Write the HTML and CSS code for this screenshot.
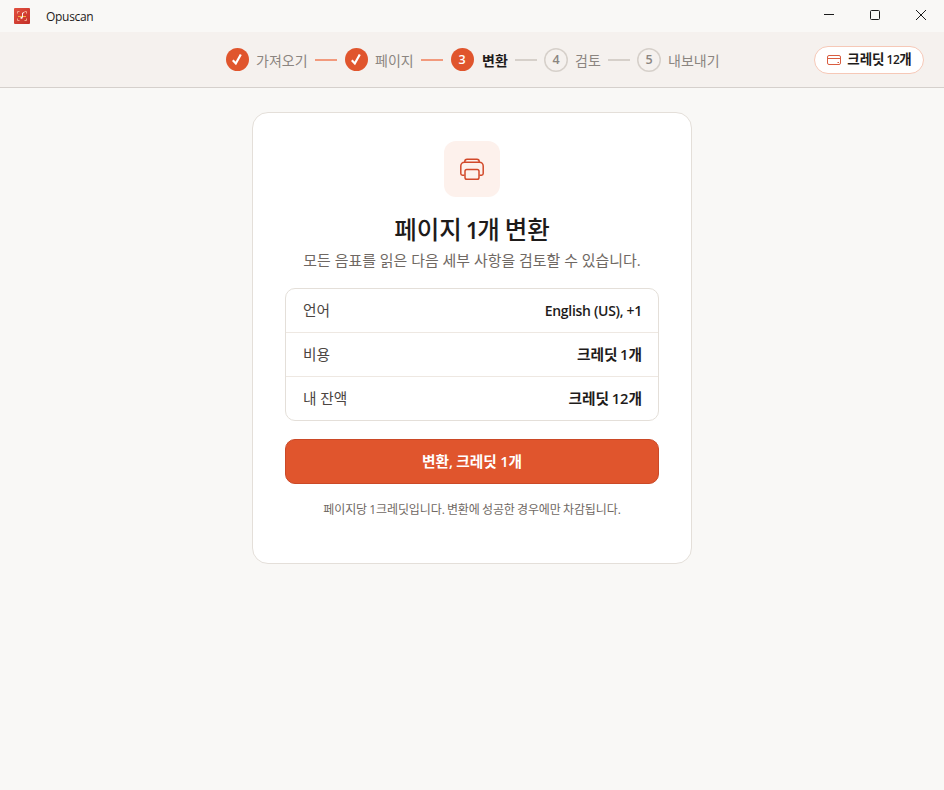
FILE: index.html
```html
<!DOCTYPE html>
<html lang="ko">
<head>
<meta charset="utf-8">
<title>Opuscan</title>
<link rel="stylesheet" href="styles.css">
</head>
<body>
<header class="titlebar">
  <svg class="logo" width="16" height="16" viewBox="0 0 16 16" fill="none">
    <defs><linearGradient id="red" x1="0" y1="0" x2="1" y2="1"><stop stop-color="#e2503f"/><stop offset="1" stop-color="#c32f28"/></linearGradient></defs>
    <rect width="16" height="16" rx="1" fill="url(#red)"/>
    <path d="M3.500 5.500v-2h2M10.500 3.500h2v2M12.500 10.500v2h-2M5.500 12.500h-2v-2" stroke="#f0a58e"/>
    <path d="M4 8.500h8" stroke="#f3b13f"/>
    <path d="M8.500 9.500V5l1.800-.5" stroke="#fff" stroke-width=".9"/>
    <ellipse cx="7.500" cy="9.800" rx="1.200" ry=".9" fill="#fff"/>
  </svg>
  <span class="app-name">Opuscan</span>
  <div class="controls">
    <svg width="46" height="32" viewBox="0 0 46 32"><path d="M18 14.500h10" stroke="#1b1b1b"/></svg>
    <svg width="46" height="32" viewBox="0 0 46 32"><rect x="18.500" y="10.500" width="9" height="9" rx="1" fill="none" stroke="#1b1b1b"/></svg>
    <svg width="46" height="32" viewBox="0 0 46 32"><path d="M18 10l10 10M28 10L18 20" stroke="#1b1b1b"/></svg>
  </div>
</header>
<nav class="stepbar">
  <ol class="steps">
    <li class="step s1"><span class="dot done"><svg width="24" height="24" viewBox="0 0 24 24"><path d="M7.800 12.300l3 3.200 5-9" fill="none" stroke="#fff" stroke-width="2.200"/></svg></span><span class="label">가져오기</span></li>
    <li class="link on"></li>
    <li class="step s2"><span class="dot done"><svg width="24" height="24" viewBox="0 0 24 24"><path d="M7.800 12.300l3 3.200 5-9" fill="none" stroke="#fff" stroke-width="2.200"/></svg></span><span class="label">페이지</span></li>
    <li class="link on"></li>
    <li class="step s3"><span class="dot done">3</span><span class="label current">변환</span></li>
    <li class="link"></li>
    <li class="step s4"><span class="dot">4</span><span class="label">검토</span></li>
    <li class="link"></li>
    <li class="step s5"><span class="dot">5</span><span class="label">내보내기</span></li>
  </ol>
  <button class="credits">
    <svg width="16" height="12" viewBox="0 0 16 12" fill="none" stroke="#d95d40"><rect x="1.500" y="1.500" width="13" height="9" rx="1.500"/><path d="M1.500 4.500h13M11.500 8.500H13"/></svg>
    <span>크레딧 <span class="num">12</span>개</span>
  </button>
</nav>
<main class="card">
  <div class="badge">
    <svg width="56" height="56" viewBox="0 0 56 56" fill="none" stroke="#d2492a" stroke-width="1.500">
      <path d="M20.500 34.200h-2a1.700 1.700 0 0 1-1.700-1.700v-7.500a3.700 3.700 0 0 1 3.700-3.700h15a3.700 3.700 0 0 1 3.700 3.700v7.500a1.700 1.700 0 0 1-1.700 1.700h-2"/>
      <path d="M20.800 21.300v-.8a2.300 2.300 0 0 1 2.300-2.300h9.800a2.300 2.300 0 0 1 2.300 2.300v.8"/>
      <rect x="21" y="28.500" width="14" height="9.800" rx="1.800"/>
    </svg>
  </div>
  <h1>페이지 <span class="num">1</span>개 변환</h1>
  <p class="sub">모든 음표를 읽은 다음 세부 사항을 검토할 수 있습니다.</p>
  <dl class="details">
    <div class="row"><dt>언어</dt><dd class="latin">English (US), +1</dd></div>
    <div class="row"><dt>비용</dt><dd>크레딧 1개</dd></div>
    <div class="row"><dt>내 잔액</dt><dd>크레딧 12개</dd></div>
  </dl>
  <button class="convert">변환, 크레딧 1개</button>
  <p class="note">페이지당 1크레딧입니다. 변환에 성공한 경우에만 차감됩니다.</p>
</main>
</body>
</html>
```

FILE: styles.css
```css
* { box-sizing: border-box; margin: 0; padding: 0; }
body { width: 944px; height: 790px; background: #f9f8f6; color: #1e1b1a; font: 14px/20px "Open Sans", "Noto Sans CJK KR", sans-serif; overflow: hidden; }
button { font: inherit; color: inherit; white-space: nowrap; }
.titlebar { height: 32px; display: flex; align-items: center; padding-left: 14px; }
.app-name { margin-left: 16px; padding-top: 1px; font-size: 12px; letter-spacing: -.3px; line-height: 31px; }
.controls { margin-left: auto; display: flex; }
.stepbar { height: 56px; background: #f5f1ee; border-bottom: 1px solid #d5d0cc; display: flex; align-items: center; justify-content: space-between; padding: 0 20px 0 225px; }
.steps { display: flex; align-items: center; list-style: none; }
.step { height: 24px; display: flex; align-items: center; gap: 7px; white-space: nowrap; }
.s1 { width: 90px; }
.s2 { width: 77px; }
.s3 { width: 65px; }
.s4 { width: 64px; }
.s5 { width: 90px; }
.dot { flex: none; width: 24px; height: 24px; box-shadow: inset 0 0 0 1.5px #d6d0ca; border-radius: 50%; display: flex; align-items: center; justify-content: center; font-size: 12.5px; font-weight: 600; color: #8b8580; }
.dot.done { width: 23px; height: 23px; margin: 0 .5px; background: #e0552d; color: #fff; box-shadow: none; }
.dot svg { flex: none; }
.label { font-size: 14px; color: #8b8580; padding-top: 2px; }
.current { color: #1e1b1a; font-weight: 700; padding-left: 1px; }
.link { width: 22px; height: 2px; background: #d6d0ca; margin-right: 7px; }
.link.on { background: #f29a7d; }
.credits { width: 110px; height: 28px; border: 1px solid #f6c8b7; border-radius: 14px; background: #fff; display: flex; align-items: center; justify-content: center; gap: 5px; font-size: 13.5px; line-height: 24px; font-weight: 600; word-spacing: -1.5px; padding-bottom: 1px; }
.credits svg { margin-top: 1px; }
.credits .num { font-size: 12px; letter-spacing: -.5px; }
.card { width: 440px; height: 452px; margin: 24px auto 0; border: 1px solid #e4dfd9; border-radius: 16px; background: #fff; padding: 28px 32px; display: flex; flex-direction: column; align-items: center; white-space: nowrap; }
.badge { width: 56px; height: 56px; border-radius: 12px; background: #fdf1ec; }
h1 { margin-top: 17px; font-size: 24.5px; line-height: 32px; font-weight: 500; word-spacing: -1.5px; }
h1 .num { font-weight: 600; font-size: 23px; letter-spacing: -1.5px; margin-left: -1px; }
.sub { margin-top: 4px; font-size: 14.95px; color: #6f6863; }
.details { width: 374px; margin-top: 18px; border: 1px solid #e4dfd9; border-radius: 10px; }
.row { height: 44px; padding: 0 16px 1px; display: flex; align-items: center; justify-content: space-between; border-bottom: 1px solid #eee8e2; }
.row:last-child { height: 43px; padding-bottom: 2px; border-bottom: 0; }
dt { color: #4b4541; font-size: 14.7px; padding-left: 1px; }
dd { font-weight: 600; font-size: 14.7px; word-spacing: -1.2px; }
.latin { font-size: 14px; letter-spacing: -.3px; word-spacing: 0; padding-top: 1px; }
.convert { width: 374px; height: 45px; margin-top: 18px; padding-bottom: 2px; border: 1px solid #cb4927; border-radius: 10px; background: #e0552d; color: #fff; font-size: 14.7px; font-weight: 600; word-spacing: -.5px; }
.note { margin-top: 16px; font-size: 12px; line-height: 20px; color: #6f6863; letter-spacing: -.1px; word-spacing: -.8px; }
```
